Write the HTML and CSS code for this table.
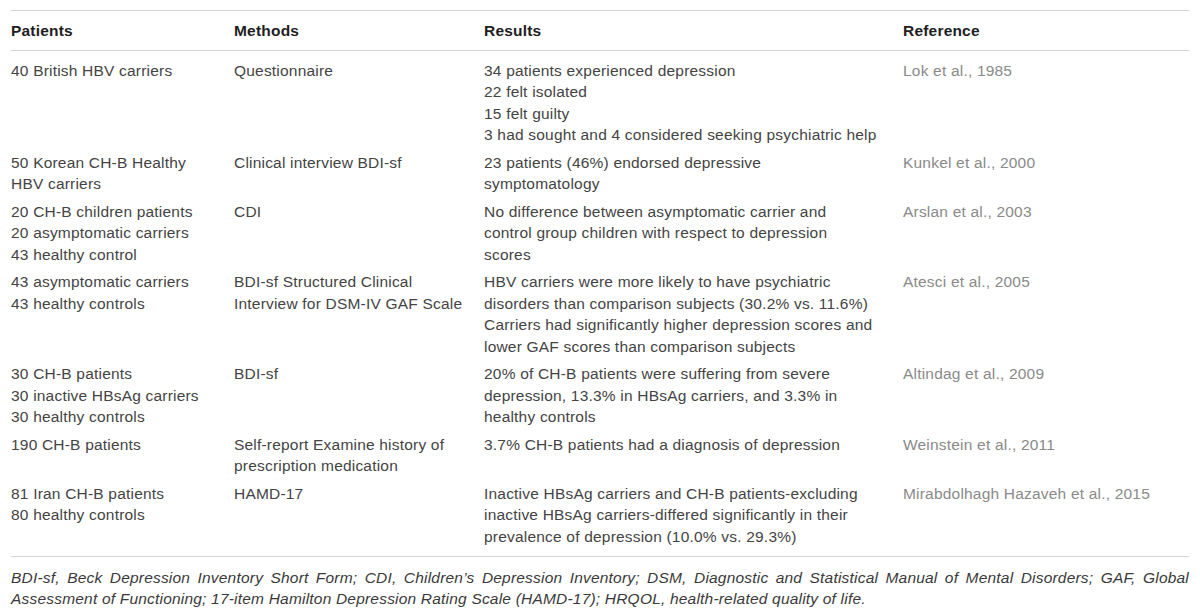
FILE: index.html
```html
<!DOCTYPE html>
<html lang="en">
<head>
<meta charset="utf-8">
<title>HBV depression studies</title>
<link rel="stylesheet" href="styles.css">
</head>
<body>
<div class="page">
  <table class="studies">
    <colgroup>
      <col class="c-pat">
      <col class="c-met">
      <col class="c-res">
      <col class="c-ref">
    </colgroup>
    <thead>
      <tr>
        <th>Patients</th>
        <th>Methods</th>
        <th>Results</th>
        <th>Reference</th>
      </tr>
    </thead>
    <tbody>
      <tr>
        <td>40 British HBV carriers</td>
        <td>Questionnaire</td>
        <td>34 patients experienced depression<br>22 felt isolated<br>15 felt guilty<br>3 had sought and 4 considered seeking psychiatric help</td>
        <td class="ref">Lok et al., 1985</td>
      </tr>
      <tr>
        <td>50 Korean CH-B Healthy<br>HBV carriers</td>
        <td>Clinical interview BDI-sf</td>
        <td>23 patients (46%) endorsed depressive<br>symptomatology</td>
        <td class="ref">Kunkel et al., 2000</td>
      </tr>
      <tr>
        <td>20 CH-B children patients<br>20 asymptomatic carriers<br>43 healthy control</td>
        <td>CDI</td>
        <td>No difference between asymptomatic carrier and<br>control group children with respect to depression<br>scores</td>
        <td class="ref">Arslan et al., 2003</td>
      </tr>
      <tr>
        <td>43 asymptomatic carriers<br>43 healthy controls</td>
        <td>BDI-sf Structured Clinical<br>Interview for DSM-IV GAF Scale</td>
        <td>HBV carriers were more likely to have psychiatric<br>disorders than comparison subjects (30.2% vs. 11.6%)<br>Carriers had significantly higher depression scores and<br>lower GAF scores than comparison subjects</td>
        <td class="ref">Atesci et al., 2005</td>
      </tr>
      <tr>
        <td>30 CH-B patients<br>30 inactive HBsAg carriers<br>30 healthy controls</td>
        <td>BDI-sf</td>
        <td>20% of CH-B patients were suffering from severe<br>depression, 13.3% in HBsAg carriers, and 3.3% in<br>healthy controls</td>
        <td class="ref">Altindag et al., 2009</td>
      </tr>
      <tr>
        <td>190 CH-B patients</td>
        <td>Self-report Examine history of<br>prescription medication</td>
        <td>3.7% CH-B patients had a diagnosis of depression</td>
        <td class="ref">Weinstein et al., 2011</td>
      </tr>
      <tr>
        <td>81 Iran CH-B patients<br>80 healthy controls</td>
        <td>HAMD-17</td>
        <td>Inactive HBsAg carriers and CH-B patients-excluding<br>inactive HBsAg carriers-differed significantly in their<br>prevalence of depression (10.0% vs. 29.3%)</td>
        <td class="ref">Mirabdolhagh Hazaveh et al., 2015</td>
      </tr>
    </tbody>
  </table>
  <p class="note">BDI-sf, Beck Depression Inventory Short Form; CDI, Children’s Depression Inventory; DSM, Diagnostic and Statistical Manual of Mental Disorders; GAF, Global Assessment of Functioning; 17-item Hamilton Depression Rating Scale (HAMD-17); HRQOL, health-related quality of life.</p>
</div>
</body>
</html>
```

FILE: styles.css
```css
html, body {
  margin: 0;
  padding: 0;
  background: #ffffff;
}

.page {
  padding: 10px 11px 0 11px;
  font-family: "Liberation Sans", Arial, Helvetica, sans-serif;
  font-size: 15.5px;
  letter-spacing: 0.2px;
  line-height: 21.5px;
  color: #444444;
}

.studies {
  width: 100%;
  border-collapse: collapse;
  table-layout: fixed;
  border-top: 1px solid #d6d6d6;
  border-bottom: 1px solid #d6d6d6;
}

.c-pat { width: 223px; }
.c-met { width: 250px; }
.c-res { width: 419px; }
.c-ref { width: auto; }

.studies th {
  text-align: left;
  font-weight: bold;
  color: #1e1e1e;
  padding: 9px 0 8px 0;
  border-bottom: 1px solid #d6d6d6;
}

.studies td {
  vertical-align: top;
  padding: 3px 0;
  white-space: nowrap;
}

.studies tbody tr:first-child td {
  padding-top: 9px;
}

.studies tbody tr:last-child td {
  padding-bottom: 9px;
}

.studies td.ref {
  color: #8a8a8a;
}

.note {
  margin: 0;
  padding-top: 10px;
  font-style: italic;
  text-align: justify;
  line-height: 21px;
  color: #3a3a3a;
}
```
